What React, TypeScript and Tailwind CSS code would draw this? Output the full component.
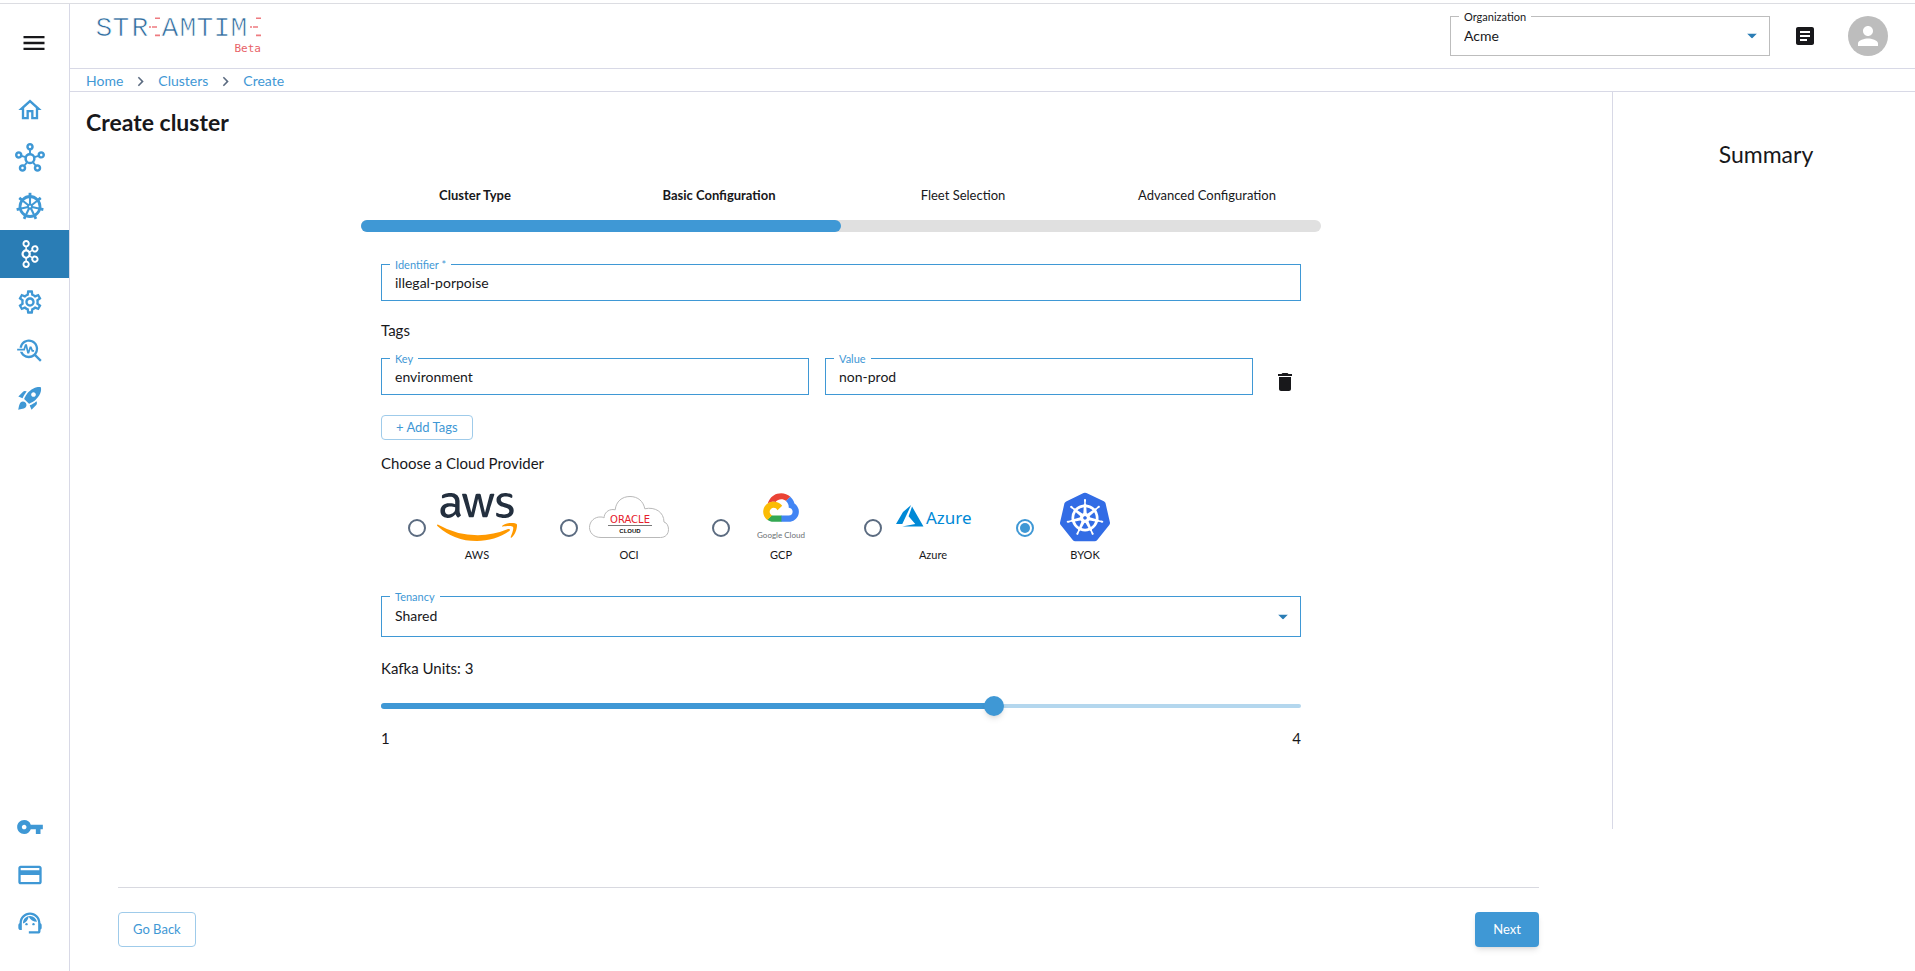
import { useState } from "react";
import type { ReactNode } from "react";
import {
  MdArticle,
  MdCreditCard,
  MdDelete,
  MdMenu,
  MdOutlineHome,
  MdOutlineHub,
  MdOutlineSettings,
  MdPerson,
  MdRocketLaunch,
  MdSupportAgent,
  MdTroubleshoot,
  MdVpnKey,
  MdChevronRight,
} from "react-icons/md";
import { FaAws } from "react-icons/fa";
import { SiApachekafka, SiKubernetes } from "react-icons/si";

function WheelIcon({ size = 28 }: { size?: number }) {
  const spokes = [0, 1, 2, 3, 4, 5, 6].map((i) => (i * 360) / 7);
  return (
    <svg width={size} height={size} viewBox="0 0 28 28" fill="none" stroke="currentColor">
      <circle cx="14" cy="14.5" r="10" strokeWidth="2.8" />
      <circle cx="14" cy="14.5" r="2" strokeWidth="1.8" />
      {spokes.map((deg) => (
        <g key={deg} transform={`rotate(${deg} 14 14.5)`}>
          <path d="M14 12.5V2" strokeWidth="2.1" />
          <path d="M14 3.4V0.8" strokeWidth="2.8" />
        </g>
      ))}
    </svg>
  );
}

function StreamtimeLogo() {
  return (
    <svg width="168" height="52" viewBox="1 -3 168 52" role="img" aria-label="Streamtime Beta">
      {/* the white outline thins the mono letters */}
      <g
        fill="#2f6c9e"
        stroke="#fff"
        strokeWidth="0.7"
        fontFamily="Liberation Mono"
        fontSize="28"
        textAnchor="middle"
      >
        <text x="9" y="23">S</text>
        <text x="26" y="23">T</text>
        <text x="45" y="23">R</text>
        <text x="75" y="23">A</text>
        <text x="93" y="23">M</text>
        <text x="110" y="23">T</text>
        <text x="127" y="23">I</text>
        <text x="144" y="23">M</text>
      </g>
      <g stroke="#ee7b80" strokeWidth="1.6">
        <path d="M60 5.2h5M54 14h2M57 14h5M60 22.4h5" />
        <path d="M161 5.2h5M155 14h2M158 14h5M161 22.4h5" />
      </g>
      <text x="166" y="39" textAnchor="end" fill="#e86268" fontFamily="DejaVu Sans Mono" fontSize="11">
        Beta
      </text>
    </svg>
  );
}

function AwsLogo() {
  return (
    <>
      <svg width="0" height="0" className="absolute">
        <linearGradient id="aws" gradientUnits="userSpaceOnUse" x1="0" y1="0" x2="0" y2="512">
          <stop offset="0.56" stopColor="#232f3e" />
          <stop offset="0.56" stopColor="#ff9900" />
        </linearGradient>
      </svg>
      <FaAws fill="url(#aws)" className="h-16 w-20 shrink-0" />
    </>
  );
}

function OracleLogo() {
  return (
    <svg width="80" height="50" viewBox="0 0 80 50">
      <path
        d="M12 45.5C4 45.5.5 40 .5 35.5.5 29 6 24.5 12 25c1.500 0 2.500.5 3 1 .2-5 4-8.500 9-8.500.8 0 1.500.1 2.200.3C27 9.500 33 4.500 41 4.500c8 0 13.500 5 14.800 12.300C66 14.500 75 20 75 30c3 .8 4.500 4 4.500 7.500 0 4.500-3 8-8 8z"
        fill="#fff"
        stroke="#b9b9b9"
      />
      <text x="41" y="31" textAnchor="middle" fill="#e5202b" fontFamily="DejaVu Sans" fontSize="10">
        ORACLE
      </text>
      <path d="M19 33.500h44" stroke="#555" strokeWidth="0.8" />
      <text x="41" y="41" textAnchor="middle" fill="#111" fontFamily="Liberation Sans" fontWeight="700" fontSize="6">
        CLOUD
      </text>
    </svg>
  );
}

function GoogleCloudLogo() {
  return (
    <svg width="80" height="50" viewBox="0 0 80 50">
      <g transform="translate(20.500 -3.200) scale(0.305)">
        <path fill="#ea4335" d="M80.600 40.300h.4l-.2-.2 14-14v-.3c-11.800-10.400-28.100-14-43.200-9.500C36.500 20.800 24.900 32.800 20.700 48c.2-.1.5-.2.8-.2 5.200-3.400 11.400-5.400 17.900-5.400 2.200 0 4.300.2 6.400.6.1-.1.2-.1.3-.1 9-9.900 24.200-11.100 34.600-2.600h-.1z" />
        <path fill="#4285f4" d="M108.100 47.800c-2.300-8.500-7.100-16.200-13.800-22.100L80 39.900c6 4.900 9.500 12.300 9.300 20v2.500c16.900 0 16.900 25.200 0 25.200H63.900v20h-.1l.1.2h25.400c14.600.1 27.500-9.300 31.800-23.100 4.300-13.800-1-28.800-13-36.900z" />
        <path fill="#34a853" d="M39 107.900h26.300V87.700H39c-1.900 0-3.700-.4-5.400-1.100l-15.200 14.600v.2c6 4.300 13.200 6.600 20.700 6.600z" />
        <path fill="#fbbc05" d="M40.200 41.900c-14.900.1-28.100 9.300-32.900 22.800-4.800 13.600 0 28.500 11.800 37.300l15.600-14.900c-8.600-3.700-10.600-14.500-4-20.800 6.600-6.400 17.800-4.400 21.700 3.800L68 55.200C61.400 46.900 51.100 42 40.200 42.100z" />
      </g>
      <text x="40" y="46" textAnchor="middle" fill="#6b6f73" fontFamily="Lato" fontSize="8">
        Google Cloud
      </text>
    </svg>
  );
}

function AzureLogo() {
  return (
    <svg width="80" height="50" viewBox="0 0 80 50" fill="#0089d6">
      <path
        transform="translate(3 10) scale(1.145)"
        d="M5.483 21.300H24L14.025 4.013l-3.038 8.347 5.836 6.938L5.483 21.300zM13.230 2.700L6.105 8.677 0 19.253h5.505v.014L13.230 2.700z"
      />
      <text x="33" y="32" fontFamily="Noto Sans" fontSize="17">
        Azure
      </text>
    </svg>
  );
}

const mainNav = [
  { label: "Home", icon: <MdOutlineHome size={28} /> },
  { label: "Fleets", icon: <MdOutlineHub size={30} /> },
  { label: "Kubernetes", icon: <WheelIcon /> },
  { label: "Clusters", icon: <SiApachekafka size={28} />, active: true },
  { label: "Settings", icon: <MdOutlineSettings size={28} /> },
  { label: "Monitoring", icon: <MdTroubleshoot size={28} /> },
  { label: "Launch", icon: <MdRocketLaunch size={28} /> },
];

const bottomNav = [
  { label: "Access keys", icon: <MdVpnKey size={28} /> },
  { label: "Billing", icon: <MdCreditCard size={28} /> },
  { label: "Support", icon: <MdSupportAgent size={28} /> },
];

const steps = ["Cluster Type", "Basic Configuration", "Fleet Selection", "Advanced Configuration"];

const providers = [
  { id: "AWS", logo: <AwsLogo /> },
  { id: "OCI", logo: <OracleLogo /> },
  { id: "GCP", logo: <GoogleCloudLogo /> },
  { id: "Azure", logo: <AzureLogo /> },
  { id: "BYOK", logo: <SiKubernetes size={50} color="#326ce5" /> },
];

function NavItem({ label, icon, active }: { label: string; icon: ReactNode; active?: boolean }) {
  return (
    <a
      href="#"
      aria-label={label}
      className={`flex h-12 items-center justify-center pr-[9px] ${
        active ? "bg-[#2a7db5] text-white" : "text-[#3f98d5]"
      }`}
    >
      {icon}
    </a>
  );
}

function TextField({ id, label, value }: { id: string; label: string; value: string }) {
  return (
    <div className="relative flex-1 border border-[#3f98d5]">
      <label
        htmlFor={id}
        className="absolute -top-[7px] left-2 bg-white px-[5px] text-[11px] leading-[14px] text-[#3f98d5]"
      >
        {label}
      </label>
      <input id={id} defaultValue={value} className="block h-[35px] w-full bg-transparent px-[13px] text-[14px] outline-none" />
    </div>
  );
}

function SelectField({
  id,
  label,
  options,
  muted,
}: {
  id: string;
  label: string;
  options: string[];
  muted?: boolean;
}) {
  return (
    <div className={`relative border ${muted ? "border-[#bdbdbd]" : "border-[#3f98d5]"}`}>
      <label
        htmlFor={id}
        className={`absolute -top-[7px] left-2 bg-white px-[5px] text-[11px] leading-[14px] ${
          muted ? "" : "text-[#3f98d5]"
        }`}
      >
        {label}
      </label>
      <select
        id={id}
        className={`block w-full appearance-none bg-transparent px-[13px] pb-[2px] text-[14px] outline-none ${
          muted ? "h-[38px]" : "h-[39px]"
        }`}
      >
        {options.map((o) => (
          <option key={o}>{o}</option>
        ))}
      </select>
      <svg
        width="10"
        height="5"
        viewBox="0 0 10 5"
        className="pointer-events-none absolute top-1/2 right-3 -translate-y-1/2 fill-[#2a7db5]"
      >
        <path d="M0 0h10L5 5z" />
      </svg>
    </div>
  );
}

export default function App() {
  const [provider, setProvider] = useState("BYOK");
  const [units, setUnits] = useState(3);

  return (
    <div className="flex min-h-screen flex-col bg-white pt-[3px] font-['Lato',sans-serif] text-[#18181b]">
      <div className="flex flex-1 border-t border-[#dcdde2]">
        <aside className="flex w-[70px] shrink-0 flex-col border-r border-[#d8d9e6] pb-6">
          <button aria-label="Menu" className="mb-1 flex h-[78px] items-center justify-center pr-[2px]">
            <MdMenu size={28} />
          </button>
          <nav>
            {mainNav.map((item) => (
              <NavItem key={item.label} {...item} />
            ))}
          </nav>
          <nav className="mt-auto">
            {bottomNav.map((item) => (
              <NavItem key={item.label} {...item} />
            ))}
          </nav>
        </aside>

        <div className="flex min-w-0 flex-1 flex-col">
          <header className="flex h-[65px] items-center border-b border-[#d8d9e6] pr-[27px] pl-[26px]">
            <StreamtimeLogo />
            <div className="ml-auto w-80">
              <SelectField id="organization" label="Organization" options={["Acme"]} muted />
            </div>
            <button aria-label="Documentation" className="ml-[23px]">
              <MdArticle size={24} />
            </button>
            <button
              aria-label="Account"
              className="ml-[31px] flex h-10 w-10 items-center justify-center rounded-full bg-[#bdbdbd] text-white"
            >
              <MdPerson size={30} />
            </button>
          </header>

          <nav
            aria-label="Breadcrumb"
            className="flex h-[23px] items-center gap-2 border-b border-[#d8d9e6] pt-[2px] pl-4 text-[14px] leading-[20px] text-[#3f98d5]"
          >
            <a href="#">Home</a>
            <MdChevronRight size={19} className="text-[#5b6b80]" />
            <a href="#">Clusters</a>
            <MdChevronRight size={19} className="text-[#5b6b80]" />
            <a href="#">Create</a>
          </nav>

          <div className="flex flex-1">
            <div className="flex min-w-0 flex-1 flex-col">
              <main className="flex-1 pt-4">
                <h1 className="pl-4 text-[23px] leading-[28px] font-bold">Create cluster</h1>

                <ol className="mx-auto mt-[49px] grid max-w-[976px] grid-cols-4 text-center text-[13px] leading-[20px]">
                  {steps.map((step, i) => (
                    <li key={step} className={i < 2 ? "font-bold" : ""}>
                      {step}
                    </li>
                  ))}
                </ol>
                <div className="mx-auto mt-[15px] h-3 max-w-[960px] rounded-full bg-[#e0e0e0]">
                  <div className="h-3 w-1/2 rounded-full bg-[#3f98d5]" />
                </div>

                <form className="mx-auto mt-8 max-w-[920px] text-[15px] leading-[20px]">
                  <TextField id="identifier" label="Identifier *" value="illegal-porpoise" />

                  <h2 className="mt-[19px]">Tags</h2>
                  <div className="mt-[18px] flex items-center gap-4">
                    <TextField id="tag-key" label="Key" value="environment" />
                    <TextField id="tag-value" label="Value" value="non-prod" />
                    <button type="button" aria-label="Delete tag" className="flex w-8 justify-center pt-[10px]">
                      <MdDelete size={24} />
                    </button>
                  </div>
                  <button
                    type="button"
                    className="mt-5 block h-[25px] rounded border border-[#9fcbea] px-[14px] pb-[2px] text-[13px] leading-[20px] text-[#3f98d5]"
                  >
                    + Add Tags
                  </button>

                  <fieldset className="mt-[13px]">
                    <legend className="mb-[19px]">Choose a Cloud Provider</legend>
                    <div className="ml-[27px] flex">
                      {providers.map((p) => (
                        <label key={p.id} className="flex w-[152px] items-center gap-[11px]">
                          <input
                            type="radio"
                            name="provider"
                            checked={provider === p.id}
                            onChange={() => setProvider(p.id)}
                            className="mt-[2px] grid h-[18px] w-[18px] shrink-0 appearance-none place-items-center rounded-full border-2 border-[#5b6b80] checked:border-[#3f98d5] checked:before:h-[10px] checked:before:w-[10px] checked:before:rounded-full checked:before:bg-[#3f98d5]"
                          />
                          <span className="flex w-20 flex-col items-center gap-[6px] text-[11px] leading-[14px]">
                            <span className="flex h-[50px] items-center">{p.logo}</span>
                            {p.id}
                          </span>
                        </label>
                      ))}
                    </div>
                  </fieldset>

                  <div className="mt-[34px]">
                    <SelectField id="tenancy" label="Tenancy" options={["Shared", "Dedicated"]} />
                  </div>

                  <label htmlFor="units" className="mt-[21px] block">
                    Kafka Units: {units}
                  </label>
                  <div className="relative mt-[18px] flex h-5 items-center">
                    <div className="h-1 w-full rounded-full bg-[#b4d7ee]" />
                    <div
                      className="absolute left-0 h-[6px] rounded-full bg-[#3f98d5]"
                      style={{ width: `${((units - 1) / 3) * 100}%` }}
                    />
                    <input
                      id="units"
                      type="range"
                      min={1}
                      max={4}
                      value={units}
                      onChange={(e) => setUnits(Number(e.target.value))}
                      className="absolute -left-[10px] h-5 w-[calc(100%+20px)] appearance-none bg-transparent [&::-webkit-slider-thumb]:h-5 [&::-webkit-slider-thumb]:w-5 [&::-webkit-slider-thumb]:appearance-none [&::-webkit-slider-thumb]:rounded-full [&::-webkit-slider-thumb]:bg-[#3f98d5] [&::-webkit-slider-thumb]:shadow-md"
                    />
                  </div>
                  <div className="mt-3 flex justify-between">
                    <span>1</span>
                    <span>4</span>
                  </div>
                </form>
              </main>

              <footer className="mt-[58px] mr-[73px] ml-12 flex justify-between border-t border-[#d8d9e0] py-6 text-[13px]">
                <button className="h-[35px] rounded border border-[#9fcbea] px-[14px] text-[#3f98d5]">Go Back</button>
                <button className="h-[35px] rounded bg-[#3f98d5] px-[18px] text-white shadow-md">Next</button>
              </footer>
            </div>

            <aside className="mb-[142px] w-[303px] shrink-0 border-l border-[#d8d9e6] pt-12 pl-1 text-center">
              <h2 className="text-[23px] leading-[28px]">Summary</h2>
            </aside>
          </div>
        </div>
      </div>
    </div>
  );
}
